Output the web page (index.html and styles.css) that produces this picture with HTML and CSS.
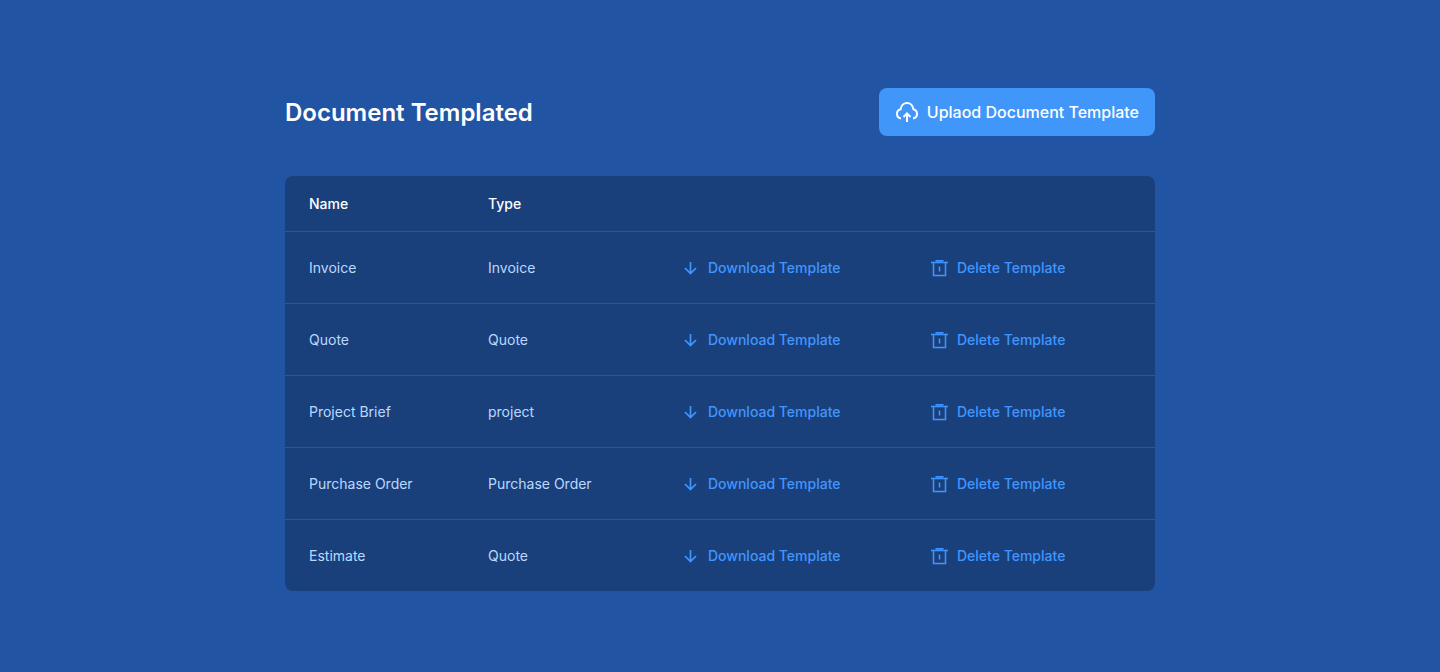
FILE: index.html
```html
<!DOCTYPE html>
<html lang="en">
<head>
<meta charset="utf-8">
<meta name="viewport" content="width=device-width, initial-scale=1">
<title>Document Templates</title>
<link rel="stylesheet" href="styles.css">
</head>
<body>
<svg class="sprite" aria-hidden="true">
  <symbol id="arrow" viewBox="0 0 20 20"><path d="M10.500 4v11M5 10l5.500 5.500L16 10" fill="none" stroke="currentColor" stroke-width="1.700"/></symbol>
  <symbol id="trash" viewBox="0 0 20 20"><path d="M2 4.500h17M6.500 2.700h8M4.500 4.500v13h12v-13M10.500 8.500v5" fill="none" stroke="currentColor" stroke-width="1.500"/></symbol>
</svg>
<main class="page">
  <header class="heading">
    <h1 class="title">Document Templated</h1>
    <button class="upload" type="button">
      <svg class="upload-icon" viewBox="0 0 24 24" aria-hidden="true"><path d="M6 18.500C3.700 18.200 2 16.200 2 13.800c0-2.200 1.500-4 3.600-4.500C6.100 5.700 8.700 3 12 3s5.900 2.700 6.400 6.300c2.100.5 3.600 2.300 3.600 4.500 0 2.400-1.700 4.400-4 4.700M12 22v-8M8.500 17 12 13.500l3.500 3.500" fill="none" stroke="currentColor" stroke-width="2"/></svg>
      Uplaod Document Template
    </button>
  </header>
  <div class="panel">
    <table class="templates">
      <thead><tr><th class="name">Name</th><th class="type">Type</th><th class="download"></th><th class="delete"></th></tr></thead>
      <tbody>
        <tr><td>Invoice</td><td>Invoice</td><td><button class="action" type="button"><svg class="icon" aria-hidden="true"><use href="#arrow"/></svg>Download Template</button></td><td><button class="action" type="button"><svg class="icon" aria-hidden="true"><use href="#trash"/></svg>Delete Template</button></td></tr>
        <tr><td>Quote</td><td>Quote</td><td><button class="action" type="button"><svg class="icon" aria-hidden="true"><use href="#arrow"/></svg>Download Template</button></td><td><button class="action" type="button"><svg class="icon" aria-hidden="true"><use href="#trash"/></svg>Delete Template</button></td></tr>
        <tr><td>Project Brief</td><td>project</td><td><button class="action" type="button"><svg class="icon" aria-hidden="true"><use href="#arrow"/></svg>Download Template</button></td><td><button class="action" type="button"><svg class="icon" aria-hidden="true"><use href="#trash"/></svg>Delete Template</button></td></tr>
        <tr><td>Purchase Order</td><td>Purchase Order</td><td><button class="action" type="button"><svg class="icon" aria-hidden="true"><use href="#arrow"/></svg>Download Template</button></td><td><button class="action" type="button"><svg class="icon" aria-hidden="true"><use href="#trash"/></svg>Delete Template</button></td></tr>
        <tr><td>Estimate</td><td>Quote</td><td><button class="action" type="button"><svg class="icon" aria-hidden="true"><use href="#arrow"/></svg>Download Template</button></td><td><button class="action" type="button"><svg class="icon" aria-hidden="true"><use href="#trash"/></svg>Delete Template</button></td></tr>
      </tbody>
    </table>
  </div>
</main>
</body>
</html>
```
FILE: styles.css
```css
* { box-sizing: border-box; }
body { margin: 0; min-height: 100vh; background: #2254a4; color: #fff; font-family: Inter, "Liberation Sans", sans-serif; }
button { font: inherit; cursor: pointer; border: 0; }
.sprite { display: none; }
.page { max-width: 902px; margin: 0 auto; padding: 88px 16px 80px; }
.heading { display: flex; flex-wrap: wrap; align-items: center; justify-content: space-between; gap: 16px; margin-bottom: 40px; }
.title { margin: 0; font-size: 24px; line-height: 33px; font-weight: 600; }
.upload { display: flex; align-items: center; gap: 8px; padding: 12px 16px; border-radius: 8px; background: #4096f9; color: #fff; font-size: 16px; line-height: 24px; font-weight: 500; }
.upload-icon { width: 24px; height: 24px; }
.panel { overflow-x: auto; border-radius: 8px; background: #1a407c; }
.templates { width: 100%; table-layout: fixed; border-collapse: separate; border-spacing: 0; font-size: 14px; line-height: 24px; text-align: left; }
.templates th { height: 56px; padding: 0 0 0 24px; font-weight: 500; border-bottom: 1px solid #2855ab; }
.templates td { height: 72px; padding: 0 0 0 24px; color: #bad9ff; border-bottom: 1px solid #2855ab; }
.templates tr:last-child td { height: 71px; border-bottom: 0; }
.name { width: 179px; }
.type { width: 192px; }
.download { width: 249px; }
.action { display: flex; align-items: center; gap: 8px; padding: 0; background: none; color: #4096ff; font-weight: 500; }
.icon { width: 20px; height: 20px; }
```
